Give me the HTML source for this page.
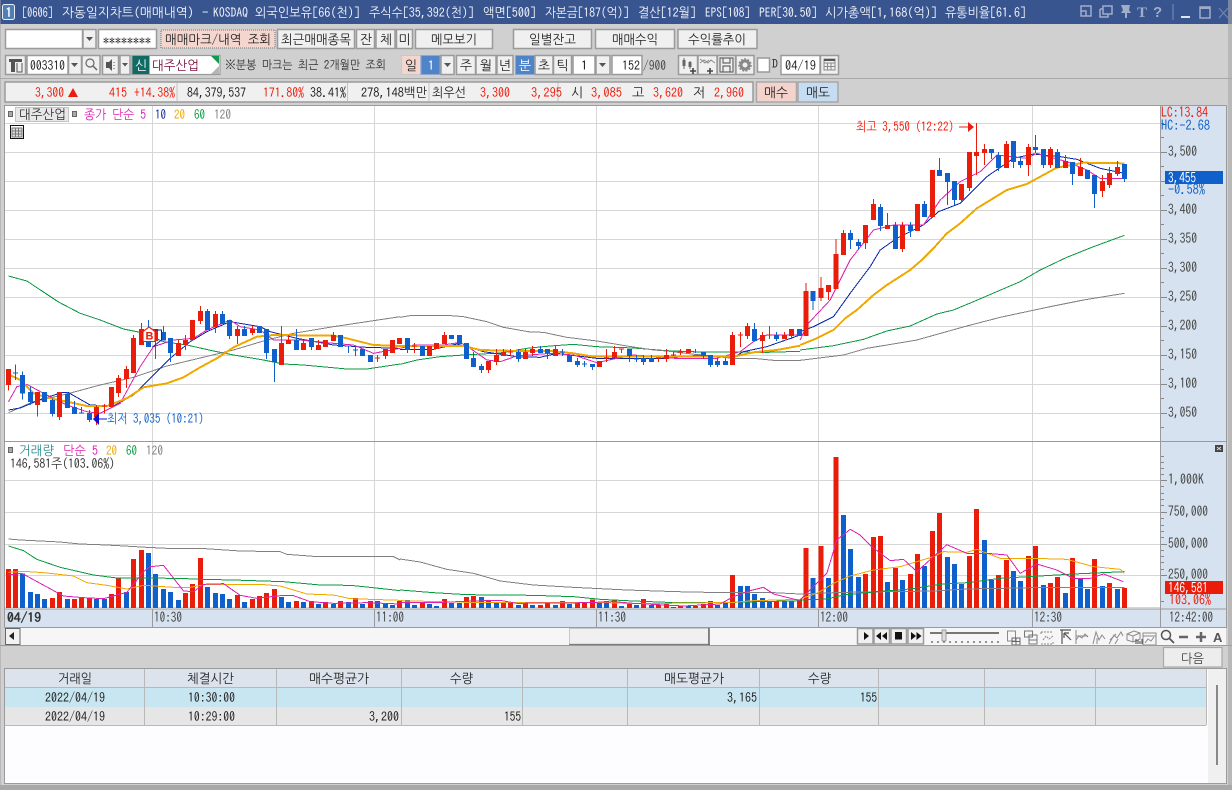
<!DOCTYPE html>
<html lang="ko"><head><meta charset="utf-8"><title>자동일지차트</title>
<style>
html,body{margin:0;padding:0;background:#d0d0d0;width:1232px;height:790px;overflow:hidden}
svg{display:block;font-family:"IPAGothic","NanumGothic","Noto Sans CJK KR",sans-serif;font-size:13px;fill:#222}
.btn{fill:#f0f0f0;stroke:#9a9a9a;stroke-width:1.5}
.inp{fill:#fff;stroke:#9a9a9a;stroke-width:1.5}
.ctr{text-anchor:middle}
.ti{fill:#f2f4fa}
.rd{fill:#ee1c0c}.bl{fill:#1060cc}.sc{fill:#444}
.c{shape-rendering:crispEdges;fill:none}
.gr{stroke:#d6d6d6;stroke-width:1;shape-rendering:crispEdges;fill:none}
.r{stroke:#ea1c0a}.b{stroke:#1060cc}
.w{stroke-width:3}.k{stroke-width:15}
.m1{stroke:#e020b0;stroke-width:3}.m2{stroke:#0a28a8;stroke-width:3}.m3{stroke:#f0a800;stroke-width:6}.m3t{stroke:#f0a800;stroke-width:3}.m4{stroke:#0a9a40;stroke-width:3}.m5{stroke:#808080;stroke-width:3}
.ic{fill:none;stroke:#666;stroke-width:1.2}
.ico{fill:none;stroke:#8a8a8a;stroke-width:1}
.tb{fill:none;stroke:#9fadc9;stroke-width:1.5}
</style></head><body>
<svg xmlns="http://www.w3.org/2000/svg" width="1232" height="790" viewBox="0 0 1232 790">
<rect width="1232" height="790" fill="#d0d0d0"/>
<!-- title bar -->
<rect width="1232" height="24" fill="#395590"/>
<rect x="2.500" y="4.500" width="12" height="15" rx="2" fill="#4f7fb5" stroke="#e8eef6"/>
<text class="ti" x="5.500" y="17" font-size="13" font-weight="bold">1</text>
<g class="ti" font-size="13">
<text x="22" y="17" textLength="31" lengthAdjust="spacingAndGlyphs">[0606]</text>
<text x="62" y="17" textLength="132" lengthAdjust="spacingAndGlyphs">자동일지차트(매매내역)</text>
<text x="202" y="17">-</text>
<text x="213" y="17" textLength="35" lengthAdjust="spacingAndGlyphs">KOSDAQ</text>
<text x="255" y="17" textLength="105" lengthAdjust="spacingAndGlyphs">외국인보유[66(천)]</text>
<text x="369" y="17" textLength="105" lengthAdjust="spacingAndGlyphs">주식수[35,392(천)]</text>
<text x="483" y="17" textLength="53" lengthAdjust="spacingAndGlyphs">액면[500]</text>
<text x="545" y="17" textLength="84" lengthAdjust="spacingAndGlyphs">자본금[187(억)]</text>
<text x="638" y="17" textLength="58" lengthAdjust="spacingAndGlyphs">결산[12월]</text>
<text x="705" y="17" textLength="45" lengthAdjust="spacingAndGlyphs">EPS[108]</text>
<text x="759" y="17" textLength="58" lengthAdjust="spacingAndGlyphs">PER[30.50]</text>
<text x="825" y="17" textLength="112" lengthAdjust="spacingAndGlyphs">시가총액[1,168(억)]</text>
<text x="945" y="17" textLength="81" lengthAdjust="spacingAndGlyphs">유통비율[61.6]</text>
</g>
<!-- title icons -->
<path class="tb" d="M1081 6h10v10h-10zM1081 11h5v5"/>
<path class="tb" d="M1103 6h9v8h-9zM1100 9h3M1100 9v8h8v-3"/>
<path d="M1121 5h9l-1 5 2 3h-4v5h-2v-5h-4l2-3z" fill="#9fadc9"/>
<text x="1137" y="17" font-size="15" font-weight="bold" font-family="Liberation Serif" style="fill:#9fadc9">T</text>
<text x="1153" y="17" font-size="15" font-family="Liberation Sans" font-weight="bold" style="fill:#9fadc9">?</text>
<path d="M1173 4v16" stroke="#7f8fb5"/>
<path d="M1181 17h9" stroke="#dfe5f2" stroke-width="2"/>
<path class="tb" d="M1200 7h10v11h-10z"/><path d="M1200 8h10" stroke="#9fadc9" stroke-width="2"/>
<path d="M1219 8l9 10M1228 8l-9 10" stroke="#6f82ad" stroke-width="1.300"/>

<!-- row1 -->
<rect class="inp" x="5.500" y="29.500" width="77" height="19"/>
<rect class="btn" x="83" y="29.500" width="13" height="19"/><path d="M86 37h7l-3.500 4z" fill="#555"/>
<rect class="inp" x="98.500" y="29.500" width="58" height="19"/>
<text x="103" y="45" font-size="12" textLength="48" lengthAdjust="spacingAndGlyphs">********</text>
<rect x="161" y="30" width="114" height="18" fill="#f5d6cf" stroke="#777" stroke-dasharray="1 1"/>
<text x="165" y="44" textLength="106" lengthAdjust="spacingAndGlyphs">매매마크/내역 조회</text>
<rect class="btn" x="277.500" y="29.500" width="77" height="19"/><text x="281" y="44" textLength="70" lengthAdjust="spacingAndGlyphs">최근매매종목</text>
<rect class="btn" x="356.500" y="29.500" width="18" height="19"/><text class="ctr" x="366" y="44">잔</text>
<rect class="btn" x="376" y="29.500" width="19" height="19"/><text class="ctr" x="386" y="44">체</text>
<rect class="btn" x="396.500" y="29.500" width="16" height="19"/><text class="ctr" x="404.500" y="44">미</text>
<rect class="btn" x="415.500" y="29.500" width="77" height="19"/><text x="431" y="44" textLength="46" lengthAdjust="spacingAndGlyphs">메모보기</text>
<rect class="btn" x="513.500" y="29.500" width="78" height="19"/><text x="529" y="44" textLength="47" lengthAdjust="spacingAndGlyphs">일별잔고</text>
<rect class="btn" x="595.500" y="29.500" width="79" height="19"/><text x="612" y="44" textLength="46" lengthAdjust="spacingAndGlyphs">매매수익</text>
<rect class="btn" x="678" y="29.500" width="79" height="19"/><text x="688" y="44" textLength="58" lengthAdjust="spacingAndGlyphs">수익률추이</text>

<!-- row2 -->
<rect class="btn" x="5.500" y="55.500" width="20" height="19"/>
<path d="M9 59h13v3H9zM11 62h4v10h-4z" fill="#555"/><path d="M17 63v9h5V63" fill="none" stroke="#555"/>
<rect class="inp" x="27" y="55.500" width="41" height="19"/><text x="30" y="70" textLength="35" lengthAdjust="spacingAndGlyphs">003310</text>
<rect class="btn" x="68.500" y="55.500" width="13" height="19"/><path d="M71 63h7l-3.500 4z" fill="#555"/>
<rect class="btn" x="82" y="55.500" width="18" height="19"/><circle cx="90" cy="63" r="4" class="ic" stroke-width="1.500"/><path d="M93 66l4 4" stroke="#666" stroke-width="1.500"/>
<rect class="btn" x="102.500" y="55.500" width="16" height="19"/><path d="M106 62h3l3-3v12l-3-3h-3z" fill="#555"/><path d="M114 62v1M114 65v1M114 68v1" stroke="#555"/>
<rect class="btn" x="120" y="55.500" width="10" height="19"/><path d="M122 63h6l-3 3.500z" fill="#555"/>
<rect x="132" y="55.500" width="88" height="19" fill="#fff" stroke="#9a9a9a" stroke-width="1.200"/>
<rect x="132.500" y="56" width="17" height="18" fill="#0f6b64"/>
<text x="135" y="70" style="fill:#fff">신</text>
<text x="152" y="70" style="fill:#7a0a3c" textLength="47" lengthAdjust="spacingAndGlyphs">대주산업</text>
<path d="M211 56h8v8z" fill="#0f9a50"/><path d="M219 66v8h-8z" fill="#b5b5b5"/>
<text x="225" y="69" font-size="12" style="fill:#333" textLength="161" lengthAdjust="spacingAndGlyphs">※분봉 마크는 최근 2개월만 조회</text>
<rect x="401.500" y="55.500" width="19" height="19" fill="#f5d6cf" stroke="#c8c8c8"/><text class="ctr" x="411" y="70">일</text>
<rect x="421" y="55.500" width="19" height="19" fill="#4f85c8" stroke="#8ca8d0"/><text class="ctr" x="431" y="70" style="fill:#fff">1</text>
<rect class="btn" x="441" y="55.500" width="13" height="19"/><path d="M444 63h7l-3.500 4z" fill="#555"/>
<rect class="btn" x="456.500" y="55.500" width="19" height="19"/><text class="ctr" x="466" y="70">주</text>
<rect class="btn" x="476" y="55.500" width="20" height="19"/><text class="ctr" x="486" y="70">월</text>
<rect class="btn" x="497" y="55.500" width="16" height="19"/><text class="ctr" x="505" y="70">년</text>
<rect x="515.500" y="55.500" width="19" height="19" fill="#4f85c8" stroke="#8ca8d0"/><text class="ctr" x="525" y="70" style="fill:#fff">분</text>
<rect class="btn" x="535" y="55.500" width="18" height="19"/><text class="ctr" x="544" y="70">초</text>
<rect class="btn" x="553.500" y="55.500" width="18" height="19"/><text class="ctr" x="562.500" y="70">틱</text>
<rect class="inp" x="573" y="55.500" width="22" height="19"/><text x="581" y="70">1</text>
<rect class="btn" x="596" y="55.500" width="14" height="19"/><path d="M599 63h7l-3.500 4z" fill="#555"/>
<rect class="inp" x="612" y="55.500" width="30" height="19"/><text x="622" y="70" textLength="18" lengthAdjust="spacingAndGlyphs">152</text>
<text x="643" y="70" style="fill:#444" textLength="23" lengthAdjust="spacingAndGlyphs">/900</text>
<rect class="btn" x="678.500" y="55.500" width="19" height="19"/><path d="M684 58v11M690 61v8" stroke="#666"/><rect x="682.500" y="60" width="3" height="6" fill="#666"/><rect x="688.500" y="62" width="3" height="5" fill="#666"/><path d="M690 71h6M693 68v6" stroke="#444" stroke-width="1.600"/>
<rect class="btn" x="698" y="55.500" width="19" height="19"/><path d="M700 63l4-3 4 3 3-3 4 3M700 59l5 4 4-3" class="ico"/><path d="M707 71h6M710 68v6" stroke="#444" stroke-width="1.600"/>
<rect class="btn" x="717.500" y="55.500" width="18" height="19"/><path d="M720 58h13v14h-13zM723 58v5h7v-5M723 72v-6h7v6" class="ic" stroke="#777"/>
<rect class="btn" x="736" y="55.500" width="18" height="19"/><circle cx="745" cy="65" r="4" fill="none" stroke="#888" stroke-width="3"/><circle cx="745" cy="65" r="6" fill="none" stroke="#888" stroke-width="1.500" stroke-dasharray="2 1.400"/>
<rect class="inp" x="757.500" y="58" width="12" height="14" stroke-width="1"/>
<text x="772" y="68" font-size="12" style="fill:#333" textLength="6" lengthAdjust="spacingAndGlyphs">D</text>
<rect class="inp" x="781" y="55.500" width="39" height="19"/><text x="785" y="70" textLength="31" lengthAdjust="spacingAndGlyphs">04/19</text>
<rect class="btn" x="820.500" y="55.500" width="18" height="19"/><path d="M824 59h11v11h-11zM824 63h11M827.500 63v7M831 63v7M824 66.500h11" class="ico" stroke="#666"/><path d="M824 60h11" stroke="#555" stroke-width="2"/>
<path d="M0 78.500H1232" stroke="#a8a8a8"/>

<!-- row3 -->
<rect x="5" y="82" width="748" height="20" fill="#f0f0f0" stroke="#9a9a9a" stroke-width="1.500"/>
<path d="M177 83v18M347.500 83v18M429 83v18M558 83v18" stroke="#c4c4c4"/>
<g class="rd">
<text x="35" y="97" textLength="29" lengthAdjust="spacingAndGlyphs">3,300</text>
<path d="M68 97l5-9 5 9z" fill="#ee1c0c"/>
<text x="109" y="97" textLength="18" lengthAdjust="spacingAndGlyphs">415</text>
<text x="134" y="97" textLength="41" lengthAdjust="spacingAndGlyphs">+14.38%</text>
<text x="263" y="97" textLength="41" lengthAdjust="spacingAndGlyphs">171.80%</text>
<text x="480" y="97" textLength="30" lengthAdjust="spacingAndGlyphs">3,300</text>
<text x="531" y="97" textLength="31" lengthAdjust="spacingAndGlyphs">3,295</text>
<text x="591" y="97" textLength="31" lengthAdjust="spacingAndGlyphs">3,085</text>
<text x="653" y="97" textLength="30" lengthAdjust="spacingAndGlyphs">3,620</text>
<text x="714" y="97" textLength="30" lengthAdjust="spacingAndGlyphs">2,960</text>
</g>
<text x="187" y="97" textLength="59" lengthAdjust="spacingAndGlyphs">84,379,537</text>
<text x="310" y="97" textLength="36" lengthAdjust="spacingAndGlyphs">38.41%</text>
<text x="361" y="97" textLength="66" lengthAdjust="spacingAndGlyphs">278,148백만</text>
<text x="432" y="97" textLength="34" lengthAdjust="spacingAndGlyphs">최우선</text>
<text x="571" y="97">시</text><text x="632" y="97">고</text><text x="693" y="97">저</text>
<rect x="756.500" y="82" width="40" height="20" fill="#f5d3cd" stroke="#a8a8a8" stroke-width="1.500"/><text class="ctr" x="776" y="97" textLength="24" lengthAdjust="spacingAndGlyphs">매수</text>
<rect x="798" y="82" width="40" height="20" fill="#c5dcf1" stroke="#a8a8a8" stroke-width="1.500"/><text class="ctr" x="818" y="97" textLength="24" lengthAdjust="spacingAndGlyphs">매도</text>

<!-- chart frame -->
<rect x="4.500" y="105.500" width="1222" height="522" fill="#fff" stroke="#9a9a9a"/>
<rect x="1161" y="106" width="65" height="521" fill="#d6e2ef"/>
<path d="M1160.500 106V627" stroke="#9a9a9a"/>
<rect x="5" y="609" width="1221" height="18" fill="#d6e2ef"/>
<path d="M5 441.500H1161M5 609H1226" stroke="#9a9a9a" shape-rendering="crispEdges"/>
<path d="M1161 441.500H1226" stroke="#9a9a9a" shape-rendering="crispEdges"/>
<path d="M0 0V790" stroke="#a0a0a0" stroke-width="1"/>
<!-- grids -->
<path class="gr" d="M5 123.500H1160M5 152.500H1160M5 181.500H1160M5 210.500H1160M5 239.500H1160M5 268.500H1160M5 297.500H1160M5 326.500H1160M5 355.500H1160M5 384.500H1160M5 413.500H1160M5 480.500H1160M5 512.500H1160M5 544.500H1160M5 575.500H1160M5 607.500H1160"/>
<path class="gr" d="M152.500 106V441M374.500 106V441M596.500 106V441M818.500 106V441M1032.500 106V441M152.500 442V608M374.500 442V608M596.500 442V608M818.500 442V608M1032.500 442V608"/>
<path d="M152.500 609V627M374.500 609V627M596.500 609V627M818.500 609V627M1032.500 609V627M1160.500 609V627" stroke="#9a9a9a"/>

<!-- moving averages top -->
<g class="c" transform="translate(.17 270) scale(.33333)">
<path class="m4" d="M25 18L80 33 130 66 175 96 240 130 300 150 370 177 420 187 490 215 560 225 640 243 700 255 790 270 850 282 910 285 1040 297 1100 297 1200 282"/>
<path class="m5" d="M25 428L100 395 200 372 300 345 400 322 500 288 600 264 700 240 800 210 880 190 1000 170 1100 155 1200 140"/>
<path class="m2" d="M25 420L60 414 130 385 185 368 205 368 270 405 340 408 400 375 460 315 510 265 570 215 620 185 690 155 780 170 810 185 890 205 1000 225 1100 232 1200 235"/>
<path class="m1" d="M25 395L50 350 80 343 130 370 200 405 260 425 300 430 360 400 420 290 460 230 520 210 580 205 620 180 690 150 720 170 780 180 820 210 900 210 1000 220 1060 225 1120 250 1200 235"/>
<path class="m3" d="M25 313L60 330 100 370 150 385 200 395 260 408 320 408 380 385 430 352 500 340 550 322 600 292 650 265 700 232 770 200 820 195 1000 197 1040 205 1120 225 1200 228"/>
</g>
<g class="c" transform="translate(400.17 270) scale(.33333)">
<path class="m4" d="M0 283L50 270 120 260 190 255 300 249 380 235 450 228 520 223 590 230 700 234 800 242 900 246 1100 247 1200 244"/>
<path class="m5" d="M0 142L35 136 140 136 190 140 260 155 310 172 390 186 430 187 500 202 590 213 680 228 760 240 800 243 900 255 1000 265 1070 266 1120 271 1200 271"/>
<path class="m2" d="M0 238L100 238 170 222 250 245 350 260 420 262 470 250 590 265 800 265 900 255 1000 262 1030 245 1100 230 1200 195"/>
<path class="m1" d="M0 235L40 225 130 225 180 217 210 235 260 270 300 275 350 258 450 250 520 255 590 278 650 265 700 255 825 265 950 265 1020 245 1060 215 1100 195 1200 195"/>
<path class="m3" d="M0 228L130 228 190 228 240 240 350 243 450 243 520 250 580 260 650 260 800 259 900 260 1000 260 1060 247 1130 240 1200 227"/>
</g>
<g class="c" transform="translate(800.17 110) scale(.33333)">
<path class="m4" d="M0 720L100 707 190 688 260 663 330 648 410 612 460 600 520 575 590 545 660 515 720 480 800 442 880 410 973 376"/>
<path class="m5" d="M0 751L130 735 200 715 350 690 500 648 600 622 750 590 850 570 973 550"/>
<path class="m2" d="M0 665L40 650 100 620 150 550 210 470 240 420 290 385 370 345 415 305 480 280 560 200 640 145 700 132 780 140 830 148 900 175 973 190"/>
<path class="m1" d="M0 690L20 645 90 570 150 450 220 360 280 345 370 345 420 270 480 215 540 185 590 135 680 145 710 130 800 155 860 180 900 205 973 205"/>
<path class="m3" d="M0 705L50 685 100 660 135 625 170 600 220 555 260 525 330 480 365 450 400 415 440 370 480 340 530 295 620 240 680 222 770 173 850 158 973 160"/>
</g>

<!-- candles -->
<g class="c" transform="translate(.17 270) scale(.33333)">
<path class="r w" d="M25 297V362M112 366V440M178 366V450M289 405V465M313 402V430M355 315V381M379 288V354M400 195V309M424 159V225M466 177V267M535 210V258M556 195V240M601 108V162M646 123V189M712 168V222M757 168V195M844 168V285M865 195V222M910 210V240M955 210V240M1000 186V213M1132 255V276M1156 237V267"/>
<path class="r k" d="M25 297V345M112 366V405M178 366V441M289 411V441M313 407V410M334 351V411M355 324V369M379 297V327M400 204V309M424 177V225M466 177V213M535 219V258M556 210V225M577 150V210M601 123V153M646 132V171M712 177V198M757 177V189M844 219V285M865 210V222M910 219V240M955 225V240M976 210V231M1000 195V213M1132 263V266M1156 237V258M1177 210V249M1198 204V222"/>
<path class="b w" d="M46 283V330M67 305V388M91 350V405M157 385V440M202 366V414M223 393V432M244 411V431M268 420V456M445 150V231M490 168V212M511 204V276M622 117V180M667 123V162M688 150V207M733 168V198M799 177V267M823 237V336M889 177V240M934 204V240M1045 227V249M1066 228V258"/>
<path class="b k" d="M46 308V311M67 315V370M91 366V396M133 366V396M157 390V432M202 372V414M223 411V432M244 428V431M268 429V450M445 186V231M490 186V212M511 204V249M622 123V180M667 132V162M688 150V198M733 177V198M778 168V189M799 177V249M823 237V276M889 210V240M934 204V231M1021 195V231M1045 227V230M1066 239V242M1087 237V258M1111 255V276"/>
</g>
<g class="c" transform="translate(400.17 270) scale(.33333)">
<path class="r w" d="M43 219V249M133 186V222M265 273V309M289 237V285M310 237V258M331 237V258M376 237V267M397 228V258M466 228V258M619 237V276M643 228V264M664 237V249M775 264V276M799 237V276M820 246V258M841 237V255M997 186V285M1021 186V231M1042 159V207M1087 186V249M1108 168V207M1153 186V207M1174 177V207"/>
<path class="r k" d="M43 227V230M88 228V258M109 219V237M133 195V222M265 273V300M289 255V276M310 246V258M331 245V248M376 246V267M397 237V249M466 237V258M598 273V291M619 263V266M643 246V264M664 236V239M775 263V266M799 255V267M820 253V256M841 245V248M865 237V249M997 195V285M1021 194V197M1042 168V198M1087 195V213M1108 194V197M1153 195V207M1174 177V198"/>
<path class="b w" d="M22 204V249M220 246V291M244 282V309M355 237V276M421 228V249M442 237V267M487 237V258M532 264V291M553 273V291M577 282V300M688 237V276M709 255V276M730 255V285M754 255V276M886 237V249M910 246V267M931 255V291M952 264V291M976 264V285M1063 159V213M1129 186V213"/>
<path class="b k" d="M22 204V240M67 228V258M154 195V207M178 195V222M199 219V267M220 264V291M244 288V300M355 246V267M421 237V249M442 237V249M487 245V248M508 255V276M532 273V285M553 281V284M577 282V291M688 237V258M709 266V269M730 264V276M754 264V276M886 245V248M910 246V258M931 255V285M952 273V285M976 273V285M1063 177V213M1129 195V207M1198 177V198"/>
</g>
<g class="c" transform="translate(800.17 110) scale(.33333)">
<path class="r w" d="M18 519V678M63 501V573M85 525V570M108 387V537M130 360V435M196 345V417M220 267V330M262 309V357M307 336V426M397 180V321M484 222V279M508 126V243M529 39V195M553 102V165M619 93V174M685 102V198M751 111V174M796 135V174M841 144V198M907 195V261M928 171V234M952 153V198"/>
<path class="r k" d="M18 543V678M63 534V564M85 525V546M108 432V537M130 369V435M196 345V399M220 282V330M262 345V357M307 345V417M352 282V363M397 180V321M484 222V270M508 126V234M529 126V138M553 117V129M619 102V174M685 111V165M751 117V165M796 153V174M841 171V198M907 213V243M928 189V225M952 171V192"/>
<path class="b w" d="M39 543V600M151 360V417M175 387V417M241 282V363M286 336V417M331 336V381M373 273V321M418 144V198M442 189V285M463 213V285M574 117V147M595 126V183M640 93V174M661 141V174M706 75V129M730 117V174M772 117V174M817 156V225M883 195V294M973 162V216"/>
<path class="b k" d="M39 543V573M151 369V390M175 396V408M241 291V348M286 345V417M331 345V363M373 282V321M418 180V198M442 189V216M463 213V270M574 117V129M595 135V174M640 93V156M661 153V165M706 111V120M730 117V165M772 126V174M817 156V192M862 180V207M883 195V252M973 162V207"/>
</g>

<!-- B marker -->
<path d="M155 330h6.500v10l-9 7" fill="none" stroke="#0a28a8" stroke-width="1"/>
<path d="M149 327l6 4.500v10h-12v-10z" fill="#fff" stroke="#ea1c0a" stroke-width="1.100"/>
<text x="145.500" y="339.500" font-size="11" font-weight="bold" font-family="Liberation Sans" style="fill:#ea1c0a">B</text>

<!-- annotations -->
<text x="856" y="131" class="rd" textLength="98" lengthAdjust="spacingAndGlyphs">최고 3,550 (12:22)</text>
<path d="M959 127h10" stroke="#ee1c0c"/><path d="M968 122l6 5-6 5z" fill="#ee1c0c"/>
<text x="107" y="423" class="bl" textLength="97" lengthAdjust="spacingAndGlyphs">최저 3,035 (10:21)</text>
<path d="M98 419h9" stroke="#1010d0"/><path d="M93 419l6-6v12z" fill="#1010d0"/>

<!-- legend top -->
<rect x="8.500" y="111.500" width="4" height="5" fill="#aaa" stroke="#666"/>
<rect x="15.500" y="107.500" width="53" height="14" fill="#e8e8e8" stroke="#c4c4c4"/>
<text x="19" y="119" style="fill:#333" textLength="47" lengthAdjust="spacingAndGlyphs">대주산업</text>
<rect x="72.500" y="111.500" width="4" height="5" fill="#aaa" stroke="#666"/>
<text x="84" y="119" style="fill:#e020b0" textLength="62" lengthAdjust="spacingAndGlyphs">종가 단순 5</text>
<text x="155" y="119" style="fill:#0a28a8" textLength="11" lengthAdjust="spacingAndGlyphs">10</text>
<text x="174" y="119" style="fill:#f0a800" textLength="11" lengthAdjust="spacingAndGlyphs">20</text>
<text x="194" y="119" style="fill:#0a9a40" textLength="11" lengthAdjust="spacingAndGlyphs">60</text>
<text x="214" y="119" style="fill:#808080" textLength="17" lengthAdjust="spacingAndGlyphs">120</text>
<rect x="10.500" y="125.500" width="13" height="13" fill="#fff" stroke="#111"/>
<path d="M12 128h10v9H12zM12 131h10M12 134h10M15.500 128v9M18.500 128v9" fill="#ddd" stroke="#777"/>

<!-- volume bars -->
<g class="c" transform="translate(.17 440) scale(.33333)">
<path class="r k" d="M25 504V387M46 504V387M157 504V474M178 504V456M223 504V477M244 504V472M268 504V472M334 504V462M355 504V416M400 504V357M424 504V330M556 504V459M577 504V432M601 504V354M712 504V465M757 504V477M778 504V468M799 504V459M823 504V447M889 504V483M934 504V483M976 504V486M1021 504V483M1066 504V474M1111 504V483M1198 504V483"/>
<path class="b k" d="M67 504V400M91 504V456M112 504V462M133 504V477M202 504V477M289 504V477M313 504V477M379 504V456M445 504V339M466 504V402M490 504V447M511 504V456M535 504V480M622 504V441M646 504V459M667 504V462M688 504V477M733 504V486M844 504V471M865 504V486M910 504V486M955 504V492M1000 504V492M1045 504V486M1087 504V492M1132 504V483M1156 504V489M1177 504V495"/>
<path class="m5" d="M25 297L60 300 120 303 180 306 240 312 320 315 440 322 500 325 600 325 720 333 840 335 860 343 940 349 1180 350 1200 360"/>
<path class="m4" d="M25 318L70 332 110 358 180 382 280 405 350 414 540 415 600 418 700 420 850 425 960 435 1050 436 1100 441 1200 452"/>
<path class="m3t" d="M25 397L70 394 130 398 220 408 260 428 320 436 380 447 430 436 520 442 570 442 620 433 780 433 840 438 920 462 1000 465 1050 476 1200 481"/>
<path class="m1" d="M25 405L65 400 120 430 190 468 250 473 310 476 380 457 430 395 450 380 490 376 550 453 580 455 610 433 670 431 720 466 770 475 840 467 880 467 930 485 1000 490 1100 488 1200 492"/>
</g>
<g class="c" transform="translate(400.17 540) scale(.33333)">
<path class="r k" d="M67 204V186M133 204V177M199 204V171M220 204V168M310 204V186M331 204V186M376 204V189M421 204V195M442 204V189M487 204V183M532 204V186M553 204V187M577 204V179M643 204V180M688 204V192M730 204V177M775 204V195M799 204V192M841 204V198M886 204V198M910 204V192M931 204V183M997 204V105M1129 204V183M1198 204V177"/>
<path class="b k" d="M22 204V180M43 204V195M88 204V192M109 204V198M154 204V189M178 204V189M244 204V171M265 204V183M289 204V189M355 204V195M397 204V195M466 204V195M508 204V192M598 204V189M619 204V183M664 204V198M709 204V195M754 204V195M820 204V201M865 204V198M952 204V195M976 204V189M1021 204V138M1042 204V138M1063 204V162M1087 204V174M1108 204V183M1153 204V183M1174 204V183"/>
<path class="m5" d="M0 57L60 66 140 88 220 100 300 123 400 135 520 142 600 146 680 150 830 155 920 157 1100 157 1200 162"/>
<path class="m4" d="M0 150L100 158 200 164 400 166 520 170 600 178 700 183 800 187 1000 187 1200 182"/>
<path class="m3t" d="M0 182L200 187 600 187 700 191 800 190 1000 187 1060 182 1200 178"/>
<path class="m1" d="M0 187L100 188 220 183 300 181 350 190 560 188 640 185 700 190 850 198 960 192 1000 170 1050 152 1090 142 1120 162 1200 182"/>
</g>
<g class="c" transform="translate(800.17 440) scale(.33333)">
<path class="r k" d="M18 504V324M63 504V318M108 504V51M196 504V402M220 504V291M241 504V288M286 504V384M331 504V402M352 504V342M397 504V273M418 504V219M508 504V348M529 504V207M595 504V405M619 504V360M685 504V348M706 504V318M751 504V429M772 504V411M817 504V354M883 504V357M928 504V429M973 504V444"/>
<path class="b k" d="M39 504V414M85 504V414M130 504V225M151 504V327M175 504V411M262 504V426M307 504V420M373 504V378M442 504V351M463 504V372M484 504V432M553 504V300M574 504V420M640 504V393M661 504V423M730 504V435M796 504V459M841 504V417M862 504V447M907 504V438M952 504V447"/>
<path class="m5" d="M0 462L130 457 400 453 500 447 700 443 973 442"/>
<path class="m4" d="M0 480L80 477 130 465 230 455 330 447 420 433 500 428 600 415 720 408 820 402 973 395"/>
<path class="m3t" d="M0 477L50 460 100 430 150 408 220 390 300 380 400 350 430 335 500 337 530 328 600 355 700 355 800 358 880 380 960 388 973 400"/>
<path class="m1" d="M0 480L40 440 80 400 110 300 150 268 180 285 215 320 270 362 310 358 350 395 400 350 440 314 500 340 560 340 620 345 660 400 710 372 770 390 820 415 870 415 910 402 970 425"/>
</g>

<!-- volume legend -->
<rect x="8.500" y="447.500" width="4" height="5" fill="#aaa" stroke="#666"/>
<text x="19" y="455" style="fill:#2e8f8f" textLength="35" lengthAdjust="spacingAndGlyphs">거래량</text>
<text x="63" y="455" style="fill:#e020b0" textLength="35" lengthAdjust="spacingAndGlyphs">단순 5</text>
<text x="106" y="455" style="fill:#f0a800" textLength="11" lengthAdjust="spacingAndGlyphs">20</text>
<text x="126" y="455" style="fill:#0a9a40" textLength="11" lengthAdjust="spacingAndGlyphs">60</text>
<text x="146" y="455" style="fill:#808080" textLength="17" lengthAdjust="spacingAndGlyphs">120</text>
<text x="10" y="468" style="fill:#333" textLength="105" lengthAdjust="spacingAndGlyphs">146,581주(103.06%)</text>

<!-- scale ticks -->
<path d="M1161 123.500h3M1161 137.500h3M1161 152.500h6M1161 166.500h3M1161 181.500h6M1161 195.500h3M1161 210.500h6M1161 224.500h3M1161 239.500h6M1161 253.500h3M1161 268.500h6M1161 282.500h3M1161 297.500h6M1161 311.500h3M1161 326.500h6M1161 340.500h3M1161 355.500h6M1161 369.500h3M1161 384.500h6M1161 398.500h3M1161 413.500h6M1161 427.500h3M1161 456.500h3M1161 462.500h3M1161 468.500h3M1161 474.500h3M1161 480.500h6M1161 486.500h3M1161 493.500h3M1161 499.500h3M1161 505.500h3M1161 512.500h6M1161 518.500h3M1161 525.500h3M1161 531.500h3M1161 537.500h3M1161 544.500h6M1161 550.500h3M1161 556.500h3M1161 562.500h3M1161 569.500h3M1161 575.500h6M1161 601.500h3" stroke="#888" shape-rendering="crispEdges"/>
<g class="sc" font-size="14">
<text x="1168" y="156" textLength="29" lengthAdjust="spacingAndGlyphs">3,500</text>
<text x="1168" y="214" textLength="29" lengthAdjust="spacingAndGlyphs">3,400</text>
<text x="1168" y="243" textLength="29" lengthAdjust="spacingAndGlyphs">3,350</text>
<text x="1168" y="272" textLength="29" lengthAdjust="spacingAndGlyphs">3,300</text>
<text x="1168" y="301" textLength="29" lengthAdjust="spacingAndGlyphs">3,250</text>
<text x="1168" y="330" textLength="29" lengthAdjust="spacingAndGlyphs">3,200</text>
<text x="1168" y="359" textLength="29" lengthAdjust="spacingAndGlyphs">3,150</text>
<text x="1168" y="388" textLength="29" lengthAdjust="spacingAndGlyphs">3,100</text>
<text x="1168" y="417" textLength="29" lengthAdjust="spacingAndGlyphs">3,050</text>
<text x="1168" y="484" textLength="36" lengthAdjust="spacingAndGlyphs">1,000K</text>
<text x="1168" y="516" textLength="40" lengthAdjust="spacingAndGlyphs">750,000</text>
<text x="1168" y="548" textLength="40" lengthAdjust="spacingAndGlyphs">500,000</text>
<text x="1168" y="579" textLength="40" lengthAdjust="spacingAndGlyphs">250,000</text>
</g>
<text x="1161" y="117" font-size="14" class="rd" textLength="47" lengthAdjust="spacingAndGlyphs">LC:13.84</text>
<text x="1161" y="130" font-size="14" class="bl" textLength="49" lengthAdjust="spacingAndGlyphs">HC:-2.68</text>
<rect x="1165" y="171" width="58" height="13" fill="#1060cc"/>
<text x="1168" y="182.500" font-size="14" style="fill:#fff" textLength="28" lengthAdjust="spacingAndGlyphs">3,455</text>
<text x="1168" y="194" font-size="14" class="bl" textLength="37" lengthAdjust="spacingAndGlyphs">-0.58%</text>
<rect x="1165" y="581" width="58" height="13" fill="#ea1c0a"/>
<text x="1168" y="592.500" font-size="14" style="fill:#fff" textLength="40" lengthAdjust="spacingAndGlyphs">146,581</text>
<text x="1169" y="604.500" font-size="14" class="rd" textLength="42" lengthAdjust="spacingAndGlyphs">103.06%</text>
<rect x="1215" y="445" width="8" height="7" fill="#444"/><path d="M1217 447l4 3M1221 447l-4 3" stroke="#ddd"/>

<!-- time axis -->
<text x="7" y="622" font-weight="bold" font-size="13" style="fill:#333" textLength="34" lengthAdjust="spacingAndGlyphs">04/19</text>
<g class="sc" font-size="14">
<text x="154" y="622" textLength="28" lengthAdjust="spacingAndGlyphs">10:30</text>
<text x="376" y="622" textLength="28" lengthAdjust="spacingAndGlyphs">11:00</text>
<text x="598" y="622" textLength="28" lengthAdjust="spacingAndGlyphs">11:30</text>
<text x="820" y="622" textLength="28" lengthAdjust="spacingAndGlyphs">12:00</text>
<text x="1034" y="622" textLength="28" lengthAdjust="spacingAndGlyphs">12:30</text>
<text x="1169" y="622" textLength="44" lengthAdjust="spacingAndGlyphs">12:42:00</text>
</g>

<!-- scrollbar row -->
<rect x="5" y="628" width="1221" height="17" fill="#f6f6f6"/>
<rect x="5.500" y="628.500" width="14.500" height="16" fill="#f2f2f2" stroke="#666"/><path d="M14 632v8l-5-4z" fill="#222"/>
<rect x="569.500" y="628.500" width="139" height="15.500" fill="#f0f0f0" stroke="#c8c8c8"/><path d="M709 628v17M569 645h141" stroke="#666" stroke-width="1.500"/>
<rect x="857.500" y="628.500" width="15.500" height="15.500" class="btn"/><path d="M864 632v8l5-4z" fill="#111"/>
<rect x="874" y="628.500" width="15.500" height="15.500" class="btn"/><path d="M881 632v8l-5-4zM887 632v8l-5-4z" fill="#111"/>
<rect x="891" y="628.500" width="15.500" height="15.500" class="btn"/><rect x="895" y="632" width="7" height="7.500" fill="#111"/>
<rect x="908" y="628.500" width="15.500" height="15.500" class="btn"/><path d="M911 632v8l5-4zM916.500 632v8l5-4z" fill="#111"/>
<path d="M930 633h69" stroke="#777" stroke-width="2"/><rect x="942" y="630" width="4" height="11" fill="#ddd" stroke="#888" stroke-width=".8"/>
<path d="M932 643v-2M938 643v-2M944 643v-2M950 643v-2M956 643v-2M962 643v-2M968 643v-2M974 643v-2M980 643v-2M986 643v-2M992 643v-2M998 643v-2" stroke="#333"/>
<!-- chart tool icons -->
<g class="ico">
<path d="M1007.500 631h8v10h-8z"/><path d="M1012 638h8v7h-8zM1016 638v7M1012 641.500h8" stroke="#666"/>
<path d="M1024.500 631h8v6h-8zM1029 635h8v9h-8zM1029 640h8" stroke="#777"/>
<path d="M1041 632h12M1041 644h12M1041 632v2M1053 642v2M1043 640l3-4 3 3 4-3" stroke-dasharray="2 1"/>
<rect x="1059" y="628" width="14" height="17" fill="#fafafa" stroke="none"/>
<path d="M1060 630h11M1062 630v14M1064 633l7 7M1064 633v5M1064 633h5" stroke="#555" stroke-width="1.200"/>
<path d="M1076 644v-14M1076 640l3-4 3 2 3-4 3 3M1076 636h12" />
<path d="M1093 644l3-12 3 8 3-5 3 4M1097 644v-6"/>
<path d="M1109 644l5-9 3 3 4-6 2 4M1110 640l6-6M1115 644l3-5"/>
<path d="M1127 634l7-3 6 2v6l-7 3-6-2zM1127 634l6 2 7-3M1133 636v6" />
<path d="M1136 644v-5M1138 644v-4M1140 644v-3M1142 644v-5" stroke="#444"/>
<path d="M1143 633h13v12h-13zM1143 636h13M1145 643l3-4 3 2 3-4"/>
</g>
<circle cx="1166" cy="635" r="4.500" fill="none" stroke="#555" stroke-width="1.500"/><path d="M1169 638l5 5" stroke="#555" stroke-width="1.800"/>
<path d="M1179 637h9" stroke="#666" stroke-width="2.500"/>
<path d="M1196 637h10M1201 632v10" stroke="#666" stroke-width="2.500"/>
<text x="1213" y="642" font-family="Liberation Sans" font-weight="bold" font-size="13" style="fill:#555">A</text>
<path d="M0 645.500H1232" stroke="#9a9a9a"/>

<!-- bottom panel -->
<rect x="4.500" y="668.500" width="1222" height="115" fill="#fdfdff" stroke="#9a9a9a"/>
<rect x="1163.500" y="647.500" width="58.500" height="19.500" fill="#ededed" stroke="#a8a8a8" stroke-width="1.200"/>
<text x="1181" y="663" style="fill:#444" textLength="23" lengthAdjust="spacingAndGlyphs">다음</text>
<rect x="5" y="669" width="1201" height="18" fill="#dce3ec"/>
<rect x="5" y="688" width="1201" height="19" fill="#c8e6f1"/>
<rect x="5" y="707" width="1201" height="18" fill="#e6e6e6"/>
<path d="M5 687.500H1206M5 725.500H1206M144.500 669V725M276.500 669V725M401.500 669V725M522.500 669V725M627.500 669V725M759.500 669V725M878.500 669V725M984.500 669V725M1095.500 669V725M1206.500 669V725" stroke="#b8b8b8" shape-rendering="crispEdges"/>
<rect x="1208" y="669" width="18" height="114" fill="#f0f0f0"/>
<rect x="1216" y="685" width="2" height="80" fill="#888"/>
<g font-size="13">
<text x="58" y="683" textLength="34" lengthAdjust="spacingAndGlyphs">거래일</text>
<text x="187" y="683" textLength="47" lengthAdjust="spacingAndGlyphs">체결시간</text>
<text x="309" y="683" textLength="60" lengthAdjust="spacingAndGlyphs">매수평균가</text>
<text x="450" y="683" textLength="23" lengthAdjust="spacingAndGlyphs">수량</text>
<text x="664" y="683" textLength="60" lengthAdjust="spacingAndGlyphs">매도평균가</text>
<text x="808" y="683" textLength="23" lengthAdjust="spacingAndGlyphs">수량</text>
<text x="45" y="702" textLength="60" lengthAdjust="spacingAndGlyphs">2022/04/19</text>
<text x="188" y="702" textLength="47" lengthAdjust="spacingAndGlyphs">10:30:00</text>
<text x="727" y="702" textLength="30" lengthAdjust="spacingAndGlyphs">3,165</text>
<text x="860" y="702" textLength="17" lengthAdjust="spacingAndGlyphs">155</text>
<text x="45" y="721" textLength="60" lengthAdjust="spacingAndGlyphs">2022/04/19</text>
<text x="188" y="721" textLength="47" lengthAdjust="spacingAndGlyphs">10:29:00</text>
<text x="369" y="721" textLength="30" lengthAdjust="spacingAndGlyphs">3,200</text>
<text x="504" y="721" textLength="17" lengthAdjust="spacingAndGlyphs">155</text>
</g>
<rect x="0" y="785" width="1232" height="5" fill="#a8a8a8"/>
<rect x="1228" y="0" width="4" height="790" fill="#a8a8a8" opacity=".6"/>
</svg>
</body></html>
